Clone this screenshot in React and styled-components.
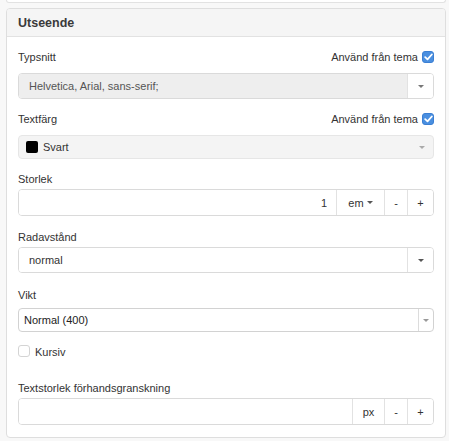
import React from "react";
import styled, { createGlobalStyle } from "styled-components";

const Global = createGlobalStyle`
  html, body { margin: 0; padding: 0; background: #f8f8f8; }
  body { font-family: "Liberation Sans", Arial, sans-serif; font-size: 11px; color: #333; }
  * { box-sizing: border-box; }
`;

const Page = styled.div`
  width: 449px;
  height: 441px;
  overflow: hidden;
  padding: 0 3px 0 6px;
`;

const PrevPanel = styled.div`
  height: 3px;
  background: #fff;
  border: 1px solid #e2e2e2;
  border-top: none;
  border-radius: 0 0 4px 4px;
  margin-bottom: 5px;
`;

const Panel = styled.section`
  background: #fff;
  border: 1px solid #dedede;
  border-radius: 4px;
  overflow: hidden;
`;

const PanelHeader = styled.header`
  height: 28px;
  display: flex;
  align-items: center;
  padding: 0 11px;
  background: #f5f5f5;
  border-bottom: 1px solid #e2e2e2;
  font-weight: bold;
  font-size: 12.5px;
  color: #3a3a3a;
`;

const PanelBody = styled.div`
  padding: 12px 11px 12px;
`;

const Group = styled.div`
  margin-top: ${(p) => p.$mt || 0}px;
`;

const LabelRow = styled.div`
  display: flex;
  align-items: center;
  justify-content: space-between;
  height: 16px;
  margin-bottom: 8px;
`;

const Label = styled.div`
  line-height: 16px;
  margin-bottom: ${(p) => (p.$mb !== undefined ? p.$mb : 2)}px;
  color: #333;
`;

const ThemeToggle = styled.label`
  display: flex;
  align-items: center;
  gap: 4px;
  margin-top: -1px;
`;

const BlueCheck = styled.span`
  width: 12px;
  height: 12px;
  border-radius: 3px;
  background: #4a8fe0;
  border: 1px solid #3b7fd3;
  display: flex;
  align-items: center;
  justify-content: center;
`;

const EmptyCheck = styled.span`
  width: 12px;
  height: 12px;
  border-radius: 3px;
  background: #fff;
  border: 1px solid #d4d4d4;
`;

const InputGroup = styled.div`
  display: flex;
  height: ${(p) => p.$h || 26}px;
  border: 1px solid #dadada;
  border-radius: 4px;
  overflow: hidden;
  background: #fff;
`;

const TextInput = styled.input`
  flex: 1;
  min-width: 0;
  border: none;
  outline: none;
  height: 100%;
  padding: 0 9px 0 10px;
  font-family: "Liberation Sans", Arial, sans-serif;
  font-size: 11px;
  color: ${(p) => (p.$gray ? "#555" : "#333")};
  background: ${(p) => (p.$gray ? "#eeeeee" : "#fff")};
  text-align: ${(p) => (p.$right ? "right" : "left")};
`;

const AddonButton = styled.div`
  width: ${(p) => p.$w}px;
  flex: none;
  display: flex;
  align-items: center;
  justify-content: center;
  gap: 3px;
  border-left: 1px solid #e2e2e2;
  color: #333;
  font-size: 11px;
  background: #fff;
`;

const Caret = styled.span`
  width: 0;
  height: 0;
  border-left: ${(p) => p.$s || 3.5}px solid transparent;
  border-right: ${(p) => p.$s || 3.5}px solid transparent;
  border-top: ${(p) => p.$s || 3.5}px solid ${(p) => p.$c || "#555"};
`;

const DisabledSelect = styled.div`
  height: 24px;
  display: flex;
  align-items: center;
  padding: 0 8px 0 7px;
  background: #f4f4f4;
  border: 1px solid #e6e6e6;
  border-radius: 4px;
  color: #333;
`;

const Swatch = styled.span`
  width: 12px;
  height: 12px;
  border-radius: 2px;
  background: #000;
  margin-right: 5px;
`;

const Grow = styled.span`
  flex: 1;
`;

const NativeSelect = styled.div`
  height: 24px;
  display: flex;
  align-items: center;
  border: 1px solid #d2d2d2;
  border-radius: 4px;
  background: #fff;
  overflow: hidden;
`;

const SelectValue = styled.span`
  flex: 1;
  padding-left: 5px;
  color: #222;
`;

const SelectArrow = styled.span`
  width: 15px;
  height: 100%;
  border-left: 1px solid #dcdcdc;
  display: flex;
  align-items: center;
  justify-content: center;
`;

const CheckRow = styled.label`
  display: flex;
  align-items: center;
  gap: 5px;
  height: 12px;
  line-height: 12px;
`;

const CheckLabelText = styled.span`
  position: relative;
  top: 1px;
`;

function Check() {
  return (
    <svg width="9" height="8" viewBox="0 0 9 8">
      <path d="M1.2 4.2 L3.5 6.3 L7.8 1.5" fill="none" stroke="#fff" strokeWidth="1.8" strokeLinecap="round" strokeLinejoin="round" />
    </svg>
  );
}

function UseTheme() {
  return (
    <ThemeToggle>
      Använd från tema
      <BlueCheck>
        <Check />
      </BlueCheck>
    </ThemeToggle>
  );
}

export default function App() {
  return (
    <Page>
      <Global />
      <PrevPanel />
      <Panel>
        <PanelHeader>Utseende</PanelHeader>
        <PanelBody>
          <Group>
            <LabelRow>
              <span>Typsnitt</span>
              <UseTheme />
            </LabelRow>
            <InputGroup>
              <TextInput $gray readOnly value="Helvetica, Arial, sans-serif;" />
              <AddonButton $w={26}>
                <Caret $c="#777" $s={3} />
              </AddonButton>
            </InputGroup>
          </Group>

          <Group $mt={12}>
            <LabelRow>
              <span>Textfärg</span>
              <UseTheme />
            </LabelRow>
            <DisabledSelect>
              <Swatch />
              <Grow>Svart</Grow>
              <Caret $c="#aaa" $s={3} />
            </DisabledSelect>
          </Group>

          <Group $mt={12}>
            <Label>Storlek</Label>
            <InputGroup $h={27}>
              <TextInput $right readOnly value="1" />
              <AddonButton $w={48}>
                em
                <Caret $s={3} />
              </AddonButton>
              <AddonButton $w={23}>-</AddonButton>
              <AddonButton $w={26}>+</AddonButton>
            </InputGroup>
          </Group>

          <Group $mt={13}>
            <Label>Radavstånd</Label>
            <InputGroup>
              <TextInput readOnly value="normal" />
              <AddonButton $w={26}>
                <Caret $s={3} />
              </AddonButton>
            </InputGroup>
          </Group>

          <Group $mt={14}>
            <Label $mb={5}>Vikt</Label>
            <NativeSelect>
              <SelectValue>Normal (400)</SelectValue>
              <SelectArrow>
                <Caret $c="#999" $s={3} />
              </SelectArrow>
            </NativeSelect>
          </Group>

          <Group $mt={13}>
            <CheckRow>
              <EmptyCheck />
              <CheckLabelText>Kursiv</CheckLabelText>
            </CheckRow>
          </Group>

          <Group $mt={23}>
            <Label>Textstorlek förhandsgranskning</Label>
            <InputGroup $h={27}>
              <TextInput readOnly value="" />
              <AddonButton $w={32}>px</AddonButton>
              <AddonButton $w={23}>-</AddonButton>
              <AddonButton $w={26}>+</AddonButton>
            </InputGroup>
          </Group>
        </PanelBody>
      </Panel>
    </Page>
  );
}
